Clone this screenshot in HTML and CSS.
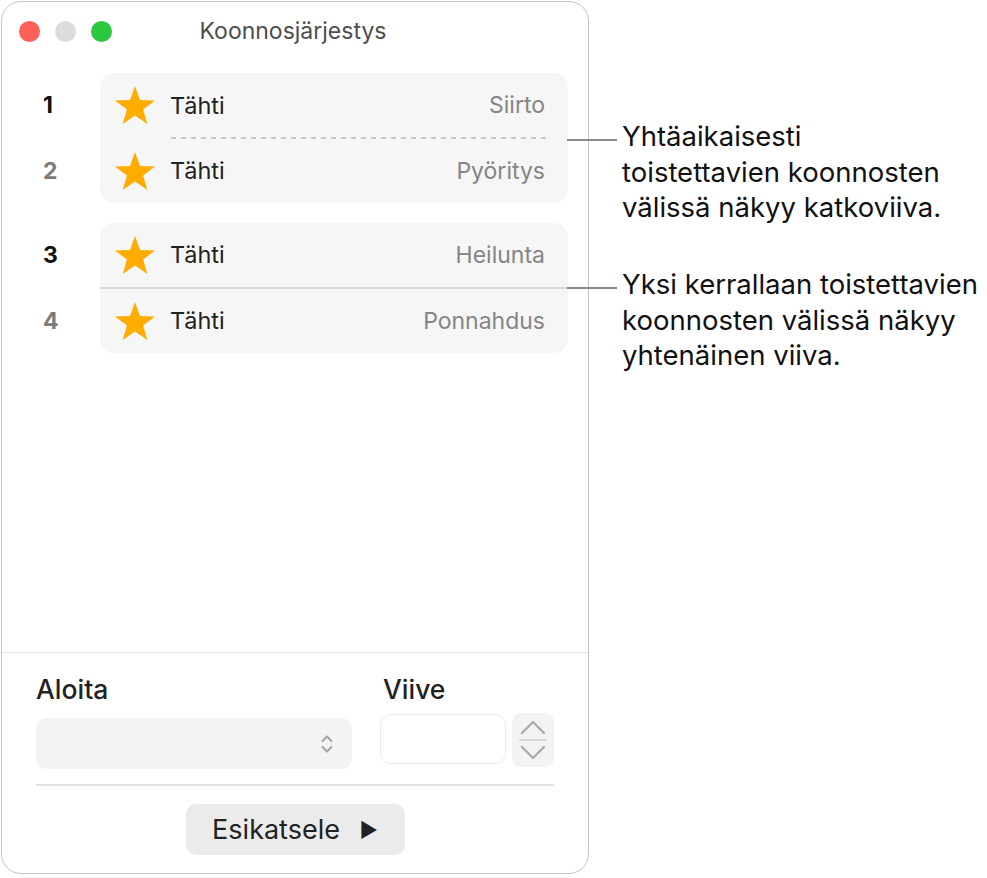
FILE: index.html
```html
<!DOCTYPE html>
<html lang="fi">
<head>
    <meta charset="UTF-8">
    <title>Koonnosjärjestys</title>
    <link rel="stylesheet" href="styles.css">
</head>
<body>
    <div id="page">
        <div class="window">
            <div class="titlebar">
                <div class="lights">
                    <span class="light light-close"></span>
                    <span class="light light-min"></span>
                    <span class="light light-zoom"></span>
                </div>
                <div class="title">Koonnosjärjestys</div>
            </div>

            <div class="build-list">
                <div class="group">
                    <div class="nums">
                        <span class="num">1</span>
                        <span class="num num-dim">2</span>
                    </div>
                    <div class="card">
                        <div class="row">
                            <svg class="star" viewBox="0 0 40 40"><polygon points="20,1 25,15.1 40,15.5 28.1,24.6 32.3,39 20,30.5 7.7,39 11.9,24.6 0,15.5 15,15.1"/></svg>
                            <span class="name">Tähti</span>
                            <span class="effect">Siirto</span>
                        </div>
                        <div class="divider-dashed"></div>
                        <div class="row">
                            <svg class="star" viewBox="0 0 40 40"><polygon points="20,1 25,15.1 40,15.5 28.1,24.6 32.3,39 20,30.5 7.7,39 11.9,24.6 0,15.5 15,15.1"/></svg>
                            <span class="name">Tähti</span>
                            <span class="effect">Pyöritys</span>
                        </div>
                    </div>
                </div>

                <div class="group">
                    <div class="nums">
                        <span class="num">3</span>
                        <span class="num num-dim">4</span>
                    </div>
                    <div class="card">
                        <div class="row">
                            <svg class="star" viewBox="0 0 40 40"><polygon points="20,1 25,15.1 40,15.5 28.1,24.6 32.3,39 20,30.5 7.7,39 11.9,24.6 0,15.5 15,15.1"/></svg>
                            <span class="name">Tähti</span>
                            <span class="effect">Heilunta</span>
                        </div>
                        <div class="divider-solid"></div>
                        <div class="row">
                            <svg class="star" viewBox="0 0 40 40"><polygon points="20,1 25,15.1 40,15.5 28.1,24.6 32.3,39 20,30.5 7.7,39 11.9,24.6 0,15.5 15,15.1"/></svg>
                            <span class="name">Tähti</span>
                            <span class="effect">Ponnahdus</span>
                        </div>
                    </div>
                </div>
            </div>

            <div class="settings">
                <div class="fields">
                    <div class="field field-start">
                        <label class="field-label">Aloita</label>
                        <div class="popup">
                            <svg class="popup-arrows" viewBox="0 0 14 22"><polyline points="2.5,8 7,3.5 11.5,8"/><polyline points="2.5,14 7,18.5 11.5,14"/></svg>
                        </div>
                    </div>
                    <div class="field field-delay">
                        <label class="field-label">Viive</label>
                        <div class="delay-controls">
                            <div class="delay-input"></div>
                            <div class="stepper">
                                <svg viewBox="0 0 42 54"><polyline points="10,20 21,9 32,20"/><line x1="8" y1="27" x2="34" y2="27"/><polyline points="10,34 21,45 32,34"/></svg>
                            </div>
                        </div>
                    </div>
                </div>
                <div class="rule"></div>
                <div class="actions">
                    <button class="preview-button">Esikatsele <span class="play">&#9654;</span></button>
                </div>
            </div>
        </div>

        <div class="note note-dashed">
            <span class="note-line"></span>
            <p>Yhtäaikaisesti<br>toistettavien koonnosten<br>välissä näkyy katkoviiva.</p>
        </div>
        <div class="note note-solid">
            <span class="note-line"></span>
            <p>Yksi kerrallaan toistettavien<br>koonnosten välissä näkyy<br>yhtenäinen viiva.</p>
        </div>
    </div>
</body>
</html>
```

FILE: styles.css
```css
body {
    margin: 0;
    background: #fff;
    font-family: Inter, "Noto Sans", sans-serif;
    color: #222;
}

#page {
    position: relative;
    width: 987px;
    height: 878px;
}

.window {
    box-sizing: border-box;
    width: 588px;
    height: 873px;
    margin: 1px 0 0 1px;
    border: 1.5px solid #c4c4c4;
    border-radius: 20px;
    display: flex;
    flex-direction: column;
}

/* title bar */

.titlebar {
    height: 58px;
    display: grid;
    grid-template-columns: 1fr auto 1fr;
    align-items: center;
}

.lights {
    display: flex;
    gap: 15px;
    padding-left: 17px;
}

.light {
    width: 21px;
    height: 21px;
    border-radius: 50%;
}

.light-close {
    background: #fe5f57;
}

.light-min {
    background: #dcdcdc;
}

.light-zoom {
    background: #2bc840;
}

.title {
    font-size: 23px;
    color: #4d4d4d;
    margin-left: -4px;
}

/* build order list */

.build-list {
    flex: 1;
    padding: 13px 20px 0 0;
    display: flex;
    flex-direction: column;
    gap: 20px;
}

.group {
    display: flex;
}

.nums {
    width: 98px;
    display: flex;
    flex-direction: column;
    justify-content: space-between;
}

.num {
    height: 64px;
    line-height: 64px;
    padding-left: 41px;
    font-size: 23px;
    font-weight: 700;
    color: #111;
}

.num-dim {
    color: #7b7b7b;
}

.card {
    flex: 1;
    background: #f6f6f6;
    border-radius: 14px;
}

.row {
    height: 64px;
    display: flex;
    align-items: center;
    padding: 0 23px 0 14px;
    font-size: 23.5px;
}

.star {
    width: 42px;
    height: 40px;
    margin-right: 14px;
    fill: #ffac00;
}

.name {
    flex: 1;
    color: #222;
}

.effect {
    font-size: 23px;
    color: #858585;
}

.divider-dashed {
    height: 1.5px;
    margin: 0 22px 0 71px;
    background-image: linear-gradient(to right, #c6c6c6 50%, transparent 50%);
    background-size: 10px 1.5px;
}

.divider-solid {
    height: 2px;
    background: #d9d9d9;
}

/* start / delay settings */

.settings {
    border-top: 1.5px solid #e3e3e3;
    padding: 21px 34px 18px 34px;
}

.fields {
    display: flex;
    gap: 28px;
}

.field-label {
    display: block;
    font-size: 26.5px;
    font-weight: 500;
    line-height: 30px;
    color: #222;
}

.field-start {
    width: 316px;
}

.popup {
    margin-top: 14px;
    height: 51px;
    border-radius: 11px;
    background: #f3f3f3;
    display: flex;
    align-items: center;
    justify-content: flex-end;
    padding-right: 18px;
}

.popup-arrows {
    width: 14px;
    height: 22px;
    fill: none;
    stroke: #a3a3a3;
    stroke-width: 2;
    stroke-linecap: round;
    stroke-linejoin: round;
}

.field-delay .field-label {
    padding-left: 3px;
}

.delay-controls {
    margin-top: 9px;
    display: flex;
    gap: 6px;
    align-items: flex-start;
}

.delay-input {
    box-sizing: border-box;
    width: 126px;
    height: 50px;
    margin-top: 1px;
    border: 1.5px solid #ececec;
    border-radius: 11px;
    background: #fff;
}

.stepper {
    width: 42px;
    height: 54px;
    border-radius: 9px;
    background: #f3f3f3;
}

.stepper svg {
    display: block;
    width: 42px;
    height: 54px;
    fill: none;
    stroke: #ababab;
    stroke-width: 2.4;
    stroke-linecap: round;
    stroke-linejoin: round;
}

.stepper line {
    stroke: #d8d8d8;
    stroke-width: 2;
}

.rule {
    height: 2px;
    margin-top: 15px;
    background: #e3e3e3;
}

.actions {
    display: flex;
    justify-content: center;
    margin-top: 18px;
}

.preview-button {
    width: 219px;
    height: 51px;
    border: none;
    border-radius: 10px;
    background: #ebebeb;
    font-family: inherit;
    font-size: 27px;
    color: #222;
}

.play {
    font-size: 20px;
    margin-left: 12px;
    vertical-align: 2px;
}

/* annotations beside the window */

.note {
    position: absolute;
    left: 567px;
    display: flex;
    align-items: flex-start;
}

.note-dashed {
    top: 118px;
}

.note-solid {
    top: 266px;
}

.note-line {
    width: 50px;
    height: 2px;
    margin-top: 20px;
    margin-right: 5px;
    background: #8a8a8a;
}

.note p {
    margin: 0;
    font-size: 27.5px;
    line-height: 35.5px;
    color: #111;
}
```
